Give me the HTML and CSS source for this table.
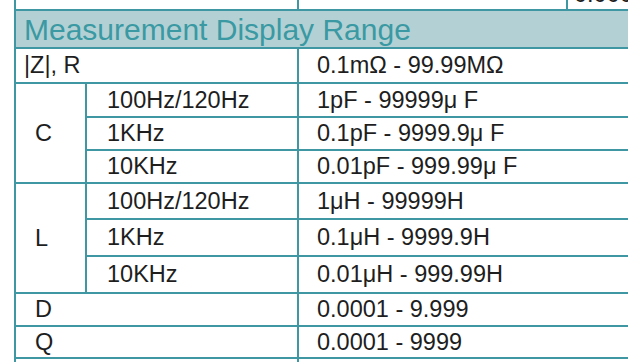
FILE: index.html
```html
<!DOCTYPE html>
<html>
<head>
<meta charset="utf-8">
<link rel="stylesheet" href="styles.css">
</head>
<body>
<div class="page">
  <table class="prev">
    <colgroup><col class="p1"><col class="p2"><col class="p3"></colgroup>
    <tr><td><div class="cutbox"></div></td><td><div class="cutbox"></div></td><td><div class="cutbox"><div class="cut">0.000 %</div></div></td></tr>
  </table>
  <table class="spec">
    <colgroup><col class="c1"><col class="c2"><col class="c3"></colgroup>
    <tr class="h38"><th colspan="3" class="head">Measurement Display Range</th></tr>
    <tr class="h35"><td colspan="2" class="lbl">|Z|, R</td><td class="val">0.1mΩ - 99.99MΩ</td></tr>
    <tr class="h34"><td rowspan="3" class="grp">C</td><td class="freq">100Hz/120Hz</td><td class="val">1pF - 99999μ F</td></tr>
    <tr class="h33"><td class="freq">1KHz</td><td class="val">0.1pF - 9999.9μ F</td></tr>
    <tr class="h33"><td class="freq">10KHz</td><td class="val">0.01pF - 999.99μ F</td></tr>
    <tr class="h36"><td rowspan="3" class="grp">L</td><td class="freq">100Hz/120Hz</td><td class="val">1μH - 99999H</td></tr>
    <tr class="h37"><td class="freq">1KHz</td><td class="val">0.1μH - 9999.9H</td></tr>
    <tr class="h37"><td class="freq">10KHz</td><td class="val">0.01μH - 999.99H</td></tr>
    <tr class="h33"><td colspan="2" class="grp">D</td><td class="val">0.0001 - 9.999</td></tr>
    <tr class="h32"><td colspan="2" class="grp">Q</td><td class="val">0.0001 - 9999</td></tr>
    <tr class="h20"><td colspan="2"></td><td></td></tr>
  </table>
</div>
</body>
</html>
```
FILE: styles.css
```css
html, body {
  margin: 0;
  padding: 0;
  background: #ffffff;
  overflow: hidden;
}
.page {
  width: 628px;
  height: 362px;
  overflow: hidden;
  padding-left: 14px;
  box-sizing: border-box;
  font-family: "Liberation Sans", Arial, sans-serif;
  color: #1e1e1e;
}
table {
  border-collapse: collapse;
  table-layout: fixed;
}
td, th {
  border: 2px solid #3f97a3;
  padding: 0;
  vertical-align: middle;
  white-space: nowrap;
}
.prev {
  width: 660px;
}
.prev td {
  border-top: none;
  border-bottom: none;
  vertical-align: top;
}
.cutbox {
  height: 9px;
  overflow: hidden;
}
.cut {
  font-size: 23.5px;
  line-height: 6px;
  margin-top: -9px;
  padding-left: 6px;
}
.prev .p1 { width: 283px; }
.prev .p2 { width: 269px; }
.prev .p3 { width: 108px; }
.spec {
  width: 660px;
}
.c1 { width: 71px; }
.c2 { width: 212px; }
.c3 { width: 377px; }
.head {
  background: #b3d1d5;
  color: #3a99a2;
  font-weight: normal;
  font-size: 30px;
  text-align: left;
  padding-left: 8px;
  padding-top: 1px;
}
.spec td {
  font-size: 23.5px;
}
.lbl { padding-left: 8px; }
.grp { padding-left: 19px; }
.freq { padding-left: 20px; }
.val { padding-left: 18px; }
.h38 { height: 38px; }
.h35 { height: 35px; }
.h34 { height: 34px; }
.h33 { height: 33px; }
.h36 { height: 36px; }
.h37 { height: 37px; }
.h32 { height: 32px; }
.h20 { height: 20px; }
```
